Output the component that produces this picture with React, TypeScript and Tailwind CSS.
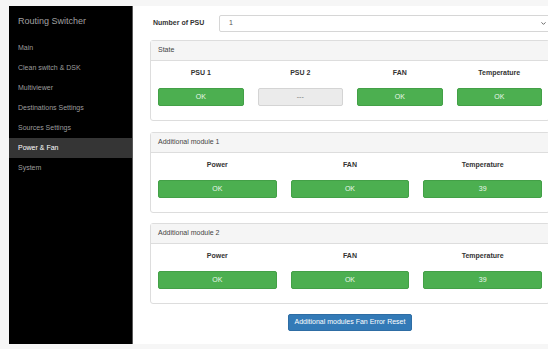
import { ChevronDown } from "lucide-react";

const menu = [
  "Main",
  "Clean switch & DSK",
  "Multiviewer",
  "Destinations Settings",
  "Sources Settings",
  "Power & Fan",
  "System",
];

type Cell = { label: string; value: string; off?: boolean };

function StatusButton({ value, off }: { value: string; off?: boolean }) {
  if (off) {
    return (
      <div className="h-[18px] flex items-center justify-center rounded-[2px] border border-[#d4d4d4] bg-[#ebebeb] text-[7px] text-[#777]">
        {value}
      </div>
    );
  }
  return (
    <div className="h-[18px] flex items-center justify-center rounded-[2px] border border-[#43a047] bg-[#4caf50] text-[7px] text-[#eaf7ea]">
      {value}
    </div>
  );
}

function Panel({ title, cells, cols }: { title: string; cells: Cell[]; cols: string }) {
  return (
    <div className="w-[400px] border border-[#dddddd] rounded-[3px] bg-white">
      <div className="h-[20px] flex items-center pl-[7px] bg-[#f5f5f5] border-b border-[#dddddd] text-[7px] text-[#444]">
        {title}
      </div>
      <div className={`grid ${cols} pt-[7px] pb-[14px]`}>
        {cells.map((c, i) => (
          <div key={i} className="pl-[7px] pr-[7px] flex flex-col">
            <div className="h-[10px] flex items-center justify-center text-[7px] font-bold text-[#333]">
              {c.label}
            </div>
            <div className="mt-[10px]">
              <StatusButton value={c.value} off={c.off} />
            </div>
          </div>
        ))}
      </div>
    </div>
  );
}

export default function App() {
  const module = (t: string): Cell[] => [
    { label: "Power", value: "OK" },
    { label: "FAN", value: "OK" },
    { label: "Temperature", value: t },
  ];

  return (
    <div
      className="w-[548px] h-[349px] overflow-hidden bg-[#f6f6f6]"
      style={{ fontFamily: '"Liberation Sans", Arial, sans-serif' }}
    >
      <div className="flex w-[580px] pt-[6px] pl-[9px]">
        <aside className="w-[124px] h-[338px] bg-black border-r border-[#5a5a5a] shrink-0">
          <div className="h-[32px] flex items-center pl-[9px] text-[9px] text-[#a0a0a0]">
            Routing Switcher
          </div>
          {menu.map((m) => (
            <div
              key={m}
              className={
                m === "Power & Fan"
                  ? "h-[20px] flex items-center pl-[9px] text-[7px] bg-[#353535] text-white"
                  : "h-[20px] flex items-center pl-[9px] text-[7px] text-[#9d9d9d]"
              }
            >
              {m}
            </div>
          ))}
        </aside>

        <main className="w-[440px] h-[338px] bg-white pl-[17px] pt-[9px]">
          <div className="flex items-center h-[17px]">
            <div className="w-[69px] pl-[3px] text-[7px] font-bold text-[#333]">Number of PSU</div>
            <div className="w-[332px] h-[17px] flex items-center justify-between pl-[9px] pr-[3px] border border-[#d6d6d6] rounded-[2px] text-[7px] text-[#555]">
              <span>1</span>
              <ChevronDown className="w-[7px] h-[7px] text-[#555]" strokeWidth={3} />
            </div>
          </div>

          <div className="mt-[8px] flex flex-col gap-[11px]">
            <Panel
              title="State"
              cols="grid-cols-4"
              cells={[
                { label: "PSU 1", value: "OK" },
                { label: "PSU 2", value: "---", off: true },
                { label: "FAN", value: "OK" },
                { label: "Temperature", value: "OK" },
              ]}
            />
            <Panel title="Additional module 1" cols="grid-cols-3" cells={module("39")} />
            <div className="-mt-[1px]">
              <Panel title="Additional module 2" cols="grid-cols-3" cells={module("39")} />
            </div>
          </div>

          <div className="w-[400px] flex justify-center mt-[10px]">
            <button className="h-[17px] px-[6px] rounded-[2px] bg-[#337ab7] border border-[#2e6da4] text-[7px] text-white">
              Additional modules Fan Error Reset
            </button>
          </div>
        </main>
      </div>
    </div>
  );
}
